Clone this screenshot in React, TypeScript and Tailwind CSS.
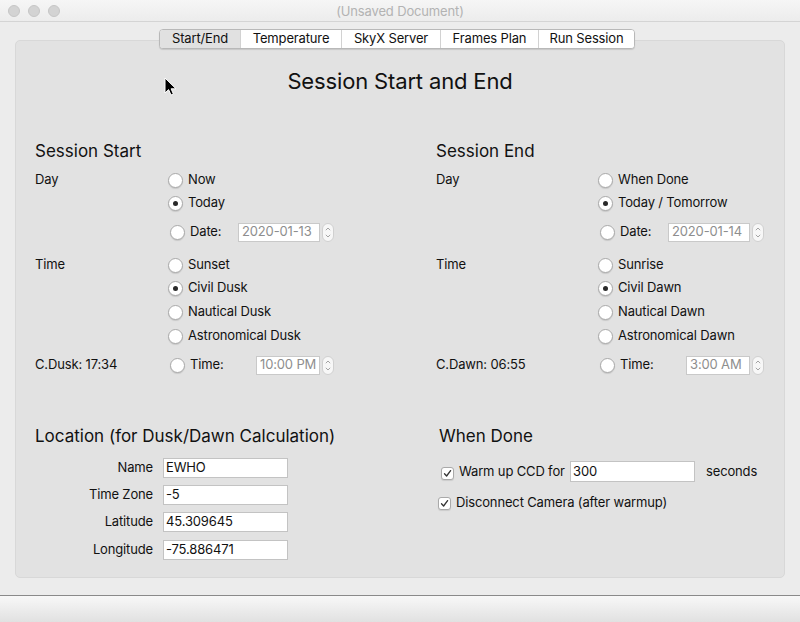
import React from "react";

const font = { fontFamily: "Inter, 'Liberation Sans', sans-serif" };

function Radio({ checked = false, shift = false }: { checked?: boolean; shift?: boolean }) {
  return (
    <span
      className={`w-[15px] h-[15px] rounded-full border border-[#a9a9a9] bg-white shadow-[0_1px_1px_rgba(0,0,0,0.12)] flex items-center justify-center shrink-0 ${
        shift ? "ml-[2px]" : ""
      }`}
    >
      {checked && <span className="w-[5px] h-[5px] rounded-full bg-[#2a2a2a]" />}
    </span>
  );
}

function Check({ className = "" }: { className?: string }) {
  return (
    <span
      className={`w-[13px] h-[13px] rounded-[3px] border border-[#a9a9a9] bg-white shadow-[0_1px_1px_rgba(0,0,0,0.1)] flex items-center justify-center shrink-0 ${className}`}
    >
      <svg width="9" height="9" viewBox="0 0 9 9">
        <path d="M1.5 4.8 L3.6 7 L7.6 1.6" fill="none" stroke="#333" strokeWidth="1.3" strokeLinecap="round" strokeLinejoin="round" />
      </svg>
    </span>
  );
}

function Stepper() {
  return (
    <span className="ml-[2px] w-[12px] h-[19px] rounded-full border border-[#d0d0d0] bg-[#f7f7f7] flex flex-col items-center justify-center gap-[3px] shrink-0">
      <svg width="6" height="4" viewBox="0 0 6 4">
        <path d="M0.8 3.2 L3 1 L5.2 3.2" fill="none" stroke="#9a9a9a" strokeWidth="0.9" />
      </svg>
      <svg width="6" height="4" viewBox="0 0 6 4">
        <path d="M0.8 0.8 L3 3 L5.2 0.8" fill="none" stroke="#9a9a9a" strokeWidth="0.9" />
      </svg>
    </span>
  );
}

type Row = {
  label?: string;
  text: string;
  checked?: boolean;
  field?: { value: string; boxWidth: string; fieldWidth: string };
  mt: string;
};

function SessionColumn({
  heading,
  labelWidth,
  rows,
}: {
  heading: string;
  labelWidth: string;
  rows: Row[];
}) {
  return (
    <div className="flex flex-col">
      <div className="h-[20px] flex items-center text-[17px] tracking-normal text-[#111]">{heading}</div>
      {rows.map((r, i) => (
        <div key={i} className={`h-[20px] flex items-center ${r.mt}`}>
          <div className={`${labelWidth} shrink-0 text-[13px]`}>{r.label ?? ""}</div>
          {r.field ? (
            <>
              <Radio checked={r.checked} shift />
              <span className={`ml-[5px] ${r.field.boxWidth} text-[13px]`}>{r.text}</span>
              <span
                className={`${r.field.fieldWidth} h-[19px] bg-white border border-[#c9c9c9] text-[13px] text-[#8e8e8e] flex items-center pl-[3px] overflow-hidden whitespace-nowrap`}
              >
                {r.field.value}
              </span>
              <Stepper />
            </>
          ) : (
            <>
              <Radio checked={r.checked} />
              <span className="ml-[5px] text-[13px]">{r.text}</span>
            </>
          )}
        </div>
      ))}
    </div>
  );
}

function LabeledInput({ label, value, mt }: { label: string; value: string; mt: string }) {
  return (
    <div className={`flex items-center ${mt}`}>
      <span className="w-[118px] text-right text-[13px]">{label}</span>
      <span className="ml-[10px] w-[125px] h-[20px] bg-white border border-[#c3c3c3] flex items-center pl-[2px] text-[13px]">
        {value}
      </span>
    </div>
  );
}

export default function App() {
  const tabs = [
    { name: "Start/End", w: "w-[80px]", active: true },
    { name: "Temperature", w: "w-[101px]" },
    { name: "SkyX Server", w: "w-[99px]" },
    { name: "Frames Plan", w: "w-[98px]" },
    { name: "Run Session", w: "w-[96px]" },
  ];

  const startRows: Row[] = [
    { label: "Day", text: "Now", mt: "mt-[8px]" },
    { text: "Today", checked: true, mt: "mt-[3px]" },
    { text: "Date:", mt: "mt-[9px]", field: { value: "2020-01-13", boxWidth: "w-[48px]", fieldWidth: "w-[82px]" } },
    { label: "Time", text: "Sunset", mt: "mt-[13px]" },
    { text: "Civil Dusk", checked: true, mt: "mt-[3px]" },
    { text: "Nautical Dusk", mt: "mt-[4px]" },
    { text: "Astronomical Dusk", mt: "mt-[4px]" },
    { label: "C.Dusk: 17:34", text: "Time:", mt: "mt-[9px]", field: { value: "10:00 PM", boxWidth: "w-[66px]", fieldWidth: "w-[64px]" } },
  ];

  const endRows: Row[] = [
    { label: "Day", text: "When Done", mt: "mt-[8px]" },
    { text: "Today / Tomorrow", checked: true, mt: "mt-[3px]" },
    { text: "Date:", mt: "mt-[9px]", field: { value: "2020-01-14", boxWidth: "w-[48px]", fieldWidth: "w-[82px]" } },
    { label: "Time", text: "Sunrise", mt: "mt-[13px]" },
    { text: "Civil Dawn", checked: true, mt: "mt-[3px]" },
    { text: "Nautical Dawn", mt: "mt-[4px]" },
    { text: "Astronomical Dawn", mt: "mt-[4px]" },
    { label: "C.Dawn: 06:55", text: "Time:", mt: "mt-[9px]", field: { value: "3:00 AM", boxWidth: "w-[66px]", fieldWidth: "w-[64px]" } },
  ];

  return (
    <div className="relative w-[800px] h-[622px] flex flex-col bg-[#ececec] text-[#111] tracking-[-0.15px] overflow-hidden" style={font}>
      {/* Title bar */}
      <div className="h-[22px] shrink-0 relative flex items-center justify-center pt-[2px] bg-gradient-to-b from-[#f6f6f6] to-[#ececec] border-b border-[#d4d4d4]">
        <div className="absolute left-[8px] top-[5px] flex gap-[8px]">
          <span className="w-[12px] h-[12px] rounded-full bg-[#d3d3d3] border border-[#c6c6c6]" />
          <span className="w-[12px] h-[12px] rounded-full bg-[#d3d3d3] border border-[#c6c6c6]" />
          <span className="w-[12px] h-[12px] rounded-full bg-[#d3d3d3] border border-[#c6c6c6]" />
        </div>
        <span className="text-[13px] text-[#b3b3b3]">(Unsaved Document)</span>
      </div>

      {/* Body */}
      <div className="flex-1 flex flex-col pt-[7px] px-[15px]">
        <div className="relative z-10 self-center flex h-[20px] -mb-[9px] ml-[-6px] rounded-[4px] border border-[#b8b8b8] bg-white shadow-[0_1px_1px_rgba(0,0,0,0.12)] overflow-hidden">
          {tabs.map((t, i) => (
            <div
              key={t.name}
              className={`${t.w} h-full flex items-center justify-center text-[13px] text-[#111] ${
                i > 0 ? "border-l border-[#d2d2d2]" : ""
              } ${t.active ? "bg-[#e1e1e1]" : "bg-white"}`}
            >
              {t.name}
            </div>
          ))}
        </div>

        <div className="h-[538px] rounded-[5px] bg-[#e2e2e2] border border-[#d8d8d8] px-[19px] pt-[27px]">
          <div className="h-[26px] flex items-center justify-center text-[22px] text-[#111]">
            Session Start and End
          </div>

          <div className="mt-[48px] grid grid-cols-[401px_1fr]">
            <SessionColumn heading="Session Start" labelWidth="w-[133px]" rows={startRows} />
            <SessionColumn heading="Session End" labelWidth="w-[162px]" rows={endRows} />
          </div>

          <div className="mt-[52px] grid grid-cols-[401px_1fr]">
            <div className="flex flex-col">
              <div className="h-[20px] flex items-center text-[17px] tracking-normal">Location (for Dusk/Dawn Calculation)</div>
              <LabeledInput label="Name" value="EWHO" mt="mt-[11px]" />
              <LabeledInput label="Time Zone" value="-5" mt="mt-[7px]" />
              <LabeledInput label="Latitude" value="45.309645" mt="mt-[7px]" />
              <LabeledInput label="Longitude" value="-75.886471" mt="mt-[8px]" />
            </div>
            <div className="flex flex-col">
              <div className="h-[20px] ml-[3px] flex items-center text-[17px] tracking-normal">When Done</div>
              <div className="mt-[14px] flex items-center h-[21px]">
                <Check className="ml-[5px] mt-[3px]" />
                <span className="ml-[5px] w-[111px] shrink-0 whitespace-nowrap text-[13px]">Warm up CCD for</span>
                <span className="w-[125px] h-[21px] bg-white border border-[#c3c3c3] flex items-center pl-[2px] text-[13px]">
                  300
                </span>
                <span className="ml-[11px] text-[13px]">seconds</span>
              </div>
              <div className="mt-[11px] flex items-center h-[20px]">
                <Check className="ml-[2px]" />
                <span className="ml-[5px] text-[13px]">Disconnect Camera (after warmup)</span>
              </div>
            </div>
          </div>
        </div>
      </div>

      {/* Bottom bar */}
      <div className="h-[27px] shrink-0 border-t border-[#8a8a8a] bg-gradient-to-b from-[#f8f8f8] to-[#e1e1e1]" />

      {/* Mouse cursor */}
      <svg className="absolute left-[164px] top-[77px]" width="13" height="20" viewBox="0 0 13 20">
        <path d="M1 1 L1 16 L4.6 12.6 L7 18 L9.4 17 L7.1 11.8 L12 11.8 Z" fill="#000" stroke="#fff" strokeWidth="1" strokeLinejoin="round" />
      </svg>
    </div>
  );
}
